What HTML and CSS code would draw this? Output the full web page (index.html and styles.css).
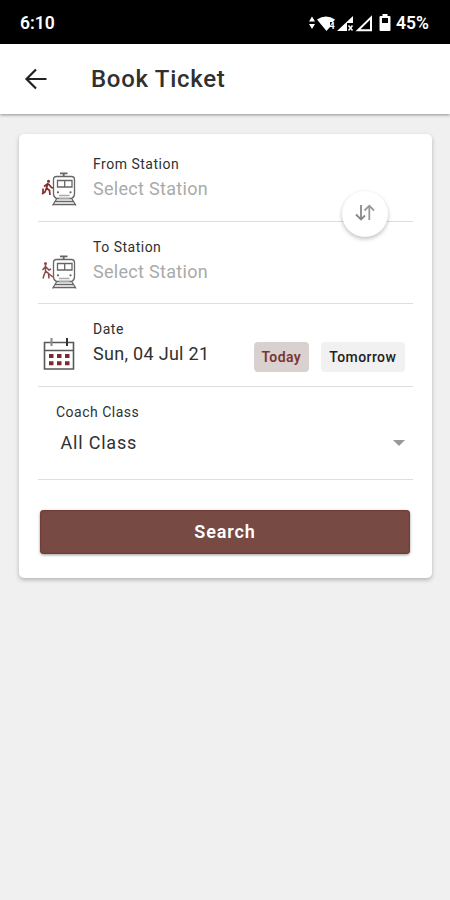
FILE: index.html
```html
<!DOCTYPE html>
<html lang="en">
<head>
  <meta charset="UTF-8">
  <title>Book Ticket</title>
  <meta name="viewport" content="width=device-width, initial-scale=1.0">
  <link rel="stylesheet" href="styles.css">
</head>
<body>

  <svg class="defs" width="0" height="0">
    <symbol id="train" viewBox="0 0 36 36">
      <g fill="none" stroke="#666" stroke-width="1.3">
        <path d="M19 2.4h7.5M22.7 2.4v2.8" stroke-width="1.8"/>
        <path d="M15.5 5.5h15q3 0 3 3v14.5q0 3-3 4.5h-15q-3-1.5-3-4.5V8.500q0-3 3-3z"/>
        <path d="M16.500 9.500h14.500v6.500H16.500zM23.700 9.500V16"/>
        <path d="M15.500 28l-4 6.500M31 28l4 6.500M14 30.500h18.500M12.500 33.500h21.500"/>
        <path d="M18 24.500h10.500M18 27.500h10.500" stroke="#aaa"/>
      </g>
      <circle cx="17" cy="21.300" r="1.100" fill="#666"/>
      <circle cx="29.500" cy="21.300" r="1.100" fill="#666"/>
    </symbol>
  </svg>

  <div class="status-bar">
    <span>6:10</span>
    <div class="status-icons">
      <svg width="82" height="20" viewBox="0 0 82 20" fill="#fff">
        <path d="M0 8.500l3-5 3 5zM0 11h6l-3 5z"/>
        <path d="M8 6.500q9-6 18 0l-2 2.500h-3v5L17.500 18z"/>
        <text x="20.500" y="16" class="wifi-num">4</text>
        <path d="M28 18L44 3v7h-6v8z"/>
        <path d="M39.500 12.500l4 5M43.500 12.500l-4 5" stroke="#fff" stroke-width="1.500"/>
        <path d="M49 17.200L62 4.500v12.700z" fill="none" stroke="#fff" stroke-width="2"/>
        <path d="M73.500 1h5v2h2q1 0 1 1v13q0 1-1 1h-9q-1 0-1-1V4q0-1 1-1h2z"/>
        <path d="M73 5h6v5h-6z" fill="#000"/>
      </svg>
      <span>45%</span>
    </div>
  </div>

  <header class="app-bar">
    <svg width="24" height="24" viewBox="0 0 24 24" fill="none" stroke="#222" stroke-width="2.200">
      <path d="M22.500 12H2.500M12 2.500L2.500 12l9.500 9.500"/>
    </svg>
    <h1>Book Ticket</h1>
  </header>

  <main class="card">
    <div class="row">
      <svg class="icon" viewBox="0 0 36 36">
        <use href="#train"/>
        <circle cx="7.500" cy="10.300" r="1.500" fill="#802c2c"/>
        <path d="M7 12l-1.500 5 3 2.500.500 4.500M5.500 17l-1.500 4-3 2M6.500 13L3 15.500M7.500 13l3 3.500 1.500.500M2 17.500v4" fill="none" stroke="#802c2c" stroke-width="1.700"/>
      </svg>
      <div class="field">
        <label>From Station</label>
        <div class="value placeholder">Select Station</div>
      </div>
      <button class="swap" type="button" aria-label="Swap stations">
        <svg width="20" height="18" viewBox="0 0 20 18" fill="none" stroke-width="1.800">
          <path d="M6 1v14.500M1 10.500l5 5 4-4" stroke="#888"/>
          <path d="M14.300 16V2M9.500 6.500l4.800-4.800L19 6.500" stroke="#999"/>
        </svg>
      </button>
    </div>

    <div class="row">
      <svg class="icon" viewBox="0 0 36 36">
        <use href="#train"/>
        <circle cx="4.500" cy="9.500" r="1.500" fill="#8d4848"/>
        <path d="M4.500 11v6l3 2.500.500 5M4.500 17.500L3 21l-1 3.500M4.500 12.500L1.500 16M5 13l3 3 2-1M8 20l4 3" fill="none" stroke="#8d4848" stroke-width="1.500"/>
      </svg>
      <div class="field">
        <label>To Station</label>
        <div class="value placeholder">Select Station</div>
      </div>
    </div>

    <div class="row">
      <svg class="icon" viewBox="0 0 36 36">
        <path d="M3.500 6.500h29v26.500h-29zM3.500 14.500h29" fill="none" stroke="#585858" stroke-width="1.600"/>
        <path d="M10.500 2v8" stroke="#888" stroke-width="2"/>
        <path d="M26 2v8" stroke="#333" stroke-width="2"/>
        <path d="M8 20h4.500M16 20h4.500M24 20h4.500M8 27.200h4.500M16 27.200h4.500M24 27.200h4.500" stroke="#782c32" stroke-width="4"/>
      </svg>
      <div class="field">
        <label>Date</label>
        <div class="value">Sun, 04 Jul 21</div>
      </div>
      <div class="chips">
        <button class="chip active" type="button">Today</button>
        <button class="chip" type="button">Tomorrow</button>
      </div>
    </div>

    <div class="row class-row">
      <div class="field">
        <label>Coach Class</label>
        <div class="value">All Class</div>
      </div>
      <span class="caret"></span>
    </div>

    <button class="search" type="button">Search</button>
  </main>

</body>
</html>
```
FILE: styles.css
```css
* {
  box-sizing: border-box;
}

body {
  margin: 0;
  min-height: 100vh;
  font-family: Roboto, sans-serif;
  background: #f0f0f0;
  color: #303030;
}

button {
  font-family: inherit;
  border: none;
  padding: 0;
}

.defs {
  display: block;
}

.status-bar {
  display: flex;
  justify-content: space-between;
  height: 44px;
  padding: 2px 21px 0 20px;
  align-items: center;
  background: #000;
  color: #fff;
  font-size: 17.5px;
  font-weight: 600;
}

.status-icons {
  display: flex;
  align-items: center;
  gap: 5px;
}

.wifi-num {
  font-size: 9px;
  font-weight: 700;
}

.app-bar {
  display: flex;
  align-items: center;
  gap: 43px;
  height: 70px;
  padding-left: 24px;
  background: #fff;
  box-shadow: 0 1px 3px rgba(0, 0, 0, 0.4);
}

.app-bar h1 {
  margin: 0;
  font-size: 24px;
  font-weight: 500;
  letter-spacing: 0.7px;
}

.card {
  height: 444px;
  margin: 20px 18px 0 19px;
  padding: 0 19px;
  background: #fff;
  border-radius: 5px;
  box-shadow: 0 2px 4px rgba(0, 0, 0, 0.25);
}

.row {
  position: relative;
  display: flex;
  height: 82.5px;
  padding: 16px 0 0 3px;
  border-bottom: 1px solid #dedede;
}

.row:first-child {
  height: 87.5px;
  padding-top: 21px;
}

.icon {
  width: 36px;
  height: 36px;
  margin: 16px 16px 0 0;
}

.field {
  flex: 1;
}

.field label {
  display: block;
  font-size: 14px;
  line-height: 18px;
  letter-spacing: 0.5px;
}

.value {
  margin-top: 4px;
  font-size: 18px;
  line-height: 24px;
  letter-spacing: 0.3px;
}

.placeholder {
  color: #aaa;
}

/* sits over the divider between the two stations */
.swap {
  position: absolute;
  right: 25px;
  bottom: -16px;
  z-index: 1;
  display: flex;
  align-items: center;
  justify-content: center;
  width: 46px;
  height: 46px;
  padding-bottom: 2px;
  border-radius: 50%;
  background: #fff;
  box-shadow: 0 2px 4px rgba(0, 0, 0, 0.25);
}

.chips {
  display: flex;
  gap: 12px;
  margin: 22px 8.5px 0 0;
}

.chip {
  width: 83.5px;
  height: 30px;
  border-radius: 4px;
  background: #f1f1f1;
  color: #222;
  font-size: 14px;
  font-weight: 500;
  letter-spacing: 0.4px;
}

.chip.active {
  width: 55.5px;
  background: #d9d1cf;
  color: #7b3535;
  font-weight: 600;
}

.class-row {
  height: 93.5px;
  padding-left: 18px;
}

.class-row .value {
  margin: 10px 0 0 4.5px;
  letter-spacing: 0.8px;
}

.caret {
  margin: 37px 8px 0 0;
  height: 6px;
  border-left: 6px solid transparent;
  border-right: 6px solid transparent;
  border-top: 6px solid #999;
}

.search {
  display: block;
  width: 370px;
  height: 44px;
  margin: 30px 0 0 2px;
  padding-bottom: 1px;
  border-radius: 4px;
  background: #784a44;
  box-shadow: inset 0 0 2px #601d1d, 0 1px 3px rgba(0, 0, 0, 0.4);
  color: #fff;
  font-size: 18px;
  font-weight: 600;
  letter-spacing: 0.9px;
}
```
